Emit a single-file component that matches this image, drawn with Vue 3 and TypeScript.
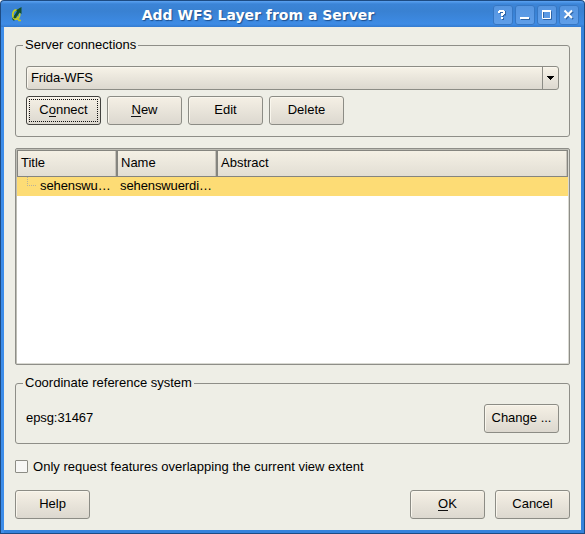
<script setup lang="ts">
import { ref } from 'vue'

interface Action { before: string; key: string; after: string }

const actions: Action[] = [
  { before: 'C', key: 'o', after: 'nnect' },
  { before: '', key: 'N', after: 'ew' },
  { before: 'Edit', key: '', after: '' },
  { before: 'Delete', key: '', after: '' },
]
const onlyOverlapping = ref(false)
</script>

<template>
  <div class="window">
    <header class="titlebar">
      <svg class="logo" width="12" height="16" viewBox="0 0 12 16">
        <path d="M1 12 3 14 8.500 5.500 10.500 7V0L4.500 3.500 6 4.500z" fill="#14502c" />
        <path d="M5.500 2.800C2.800 3 1.800 5.500 1.800 8S3 12.200 5 12.200 8.800 10.500 8.800 6.500" fill="none" stroke="#c8cf20" stroke-width="1.700" />
        <path d="M6.200 9.500 8 13.500H10" fill="none" stroke="#c0c522" stroke-width="1.700" />
        <path d="M3 11 8 3.500" stroke="#14502c" stroke-width="1.800" />
      </svg>
      <h1 class="title">Add WFS Layer from a Server</h1>
      <div class="controls">
        <span class="control"><svg width="20" height="20" viewBox="0 0 20 20"><path class="shade" d="M6 7.500H8V7H12V9.500H10V12M9 14H11" /><path d="M5 7H7M6 6H11M11 6V9M11 9H8M9 8V11M8 13H10" /></svg></span>
        <span class="control"><svg width="20" height="20" viewBox="0 0 20 20"><path class="shade" d="M6 14H15" /><path d="M5 13H14" /></svg></span>
        <span class="control"><svg width="20" height="20" viewBox="0 0 20 20"><path class="shade thin" d="M6.500 6.500H14.500V14.500H6.500z" /><path class="thin" d="M5.500 5.500H13.500V13.500H5.500z" /><path d="M5 6H14" /></svg></span>
        <span class="control"><svg width="20" height="20" viewBox="0 0 20 20"><path class="shade" d="M6.500 6.500 14 14M14 6.500 6.500 14" /><path d="M5.500 5.500 13 13M13 5.500 5.500 13" /></svg></span>
      </div>
    </header>

    <main class="dialog">
      <section class="group connections">
        <h2 class="legend">Server connections</h2>
        <div class="combo">
          <span class="combo-value">Frida-WFS</span>
          <span class="combo-arrow"><svg width="7" height="4" viewBox="0 0 7 4" shape-rendering="crispEdges"><path d="M0 0H7V1H6V2H5V3H4V4H3V3H2V2H1V1H0z" /></svg></span>
        </div>
        <div class="actions">
          <button v-for="(a, i) in actions" :key="i" class="btn" :class="{ focused: i === 0 }"><span>{{ a.before }}<span v-if="a.key" class="key">{{ a.key }}</span>{{ a.after }}</span></button>
        </div>
      </section>

      <section class="table">
        <div class="row head">
          <span class="cell">Title</span><span class="cell">Name</span><span class="cell">Abstract</span>
        </div>
        <div class="row selected">
          <span class="item"><i class="branch"></i>sehenswu…</span><span class="item">sehenswuerdi…</span>
        </div>
      </section>

      <section class="group crs">
        <h2 class="legend">Coordinate reference system</h2>
        <div class="crs-body">
          <span class="epsg">epsg:31467</span>
          <button class="btn"><span>Change ...</span></button>
        </div>
      </section>

      <label class="check">
        <input v-model="onlyOverlapping" type="checkbox" />
        <span>Only request features overlapping the current view extent</span>
      </label>

      <footer class="footer">
        <button class="btn help"><span>Help</span></button>
        <button class="btn"><span><span class="key">O</span>K</span></button>
        <button class="btn"><span>Cancel</span></button>
      </footer>
    </main>
  </div>
</template>

<style>
body { background: #fff; }
</style>

<style scoped>
* { box-sizing: border-box; }
.window {
  width: 585px;
  height: 534px;
  display: flex;
  flex-direction: column;
  padding: 1px;
  border-radius: 4px 4px 0 0;
  background: #1d4b83;
  font: 13px/16px "Liberation Sans", Arial, sans-serif;
  color: #000;
}
.titlebar {
  height: 26px;
  flex: none;
  display: flex;
  align-items: center;
  padding: 0 5px 0 10px;
  border-radius: 3px 3px 0 0;
  background: linear-gradient(#5ba2f2 0, #3b84d7 3px, #3981d2 10px, #3d8be5 23px, #347bcf);
}
.logo { flex: none; margin-top: 2px; }
.title {
  flex: 1;
  margin: 2px 0 0;
  text-align: center;
  font: bold 14px/18px "DejaVu Sans", sans-serif;
  color: #fff;
  text-shadow: 1px 1px 1px #1d4e8c;
}
.controls { display: flex; gap: 2px; padding-top: 2px; }
.control {
  width: 20px;
  height: 20px;
  border-radius: 3px;
  background: linear-gradient(#5595e0, #609fe9);
  box-shadow: inset 0 0 0 1px #3677c4;
}
.control svg { display: block; fill: none; stroke: #fff; stroke-width: 2; }
.control .shade { stroke: #2e64a6; }
.control .thin { stroke-width: 1; }
.dialog {
  flex: 1;
  display: flex;
  flex-direction: column;
  margin: 0 3px 3px;
  padding: 18px 11px 11px;
  background: #eeeee6;
  box-shadow: 3px 0 #3583dc, -3px 0 #3d8de9, 0 3px #3583dc, 3px 3px #3583dc, -3px 3px #3d8de9;
}
.group { border: 1px solid #8e8e88; border-radius: 3px; }
.legend {
  width: max-content;
  height: 16px;
  margin: -9px 0 0 7px;
  padding: 0 2px;
  font: inherit;
  background: #eeeee6;
}
.connections { height: 92px; flex: none; }
.combo {
  height: 24px;
  display: flex;
  align-items: center;
  margin: 13px 10px 0;
  border: 1px solid #8c8c85;
  border-radius: 3px;
  background: linear-gradient(#f7f3e8, #dcd8cf);
  box-shadow: inset 1px 1px #faf7ee;
}
.combo-value { flex: 1; padding: 0 0 1px 4px; letter-spacing: -0.1px; }
.combo-arrow {
  width: 16px;
  height: 100%;
  display: flex;
  align-items: center;
  justify-content: center;
  border-left: 1px solid #8c8c85;
}
.actions { display: flex; gap: 6px; margin: 6px 10px 0; }
.btn {
  width: 75px;
  height: 29px;
  flex: none;
  padding: 0 0 1px;
  border: 1px solid #8c8c85;
  border-radius: 3px;
  background: linear-gradient(#f5f0e5, #dcd8cf);
  box-shadow: inset 1px 1px #f9f6ed;
  font: inherit;
  color: #000;
}
.focused { position: relative; border-color: #42423e; }
.focused::after { content: ''; position: absolute; inset: 2px; border: 1px dotted #111; }
.key { display: inline-block; height: 15px; line-height: 15px; border-bottom: 1px solid #111; }
.table {
  height: 217px;
  flex: none;
  margin-top: 11px;
  border: 1px solid #8e8e88;
  border-radius: 2px;
  background: #fff;
  box-shadow: inset 1px 1px #bdbdb5, inset -1px -1px #d9d9d2;
  padding: 1px;
}
.row { display: grid; grid-template-columns: 100px 100px 1fr; }
.head { height: 27px; background: linear-gradient(#f5f1e5, #e1ddd3); }
.cell {
  display: flex;
  align-items: center;
  padding: 0 0 1px 3px;
  border: 1px solid #85857f;
  box-shadow: inset -1px 0 #c6c2b9;
}
.selected { height: 19px; background: #fddc75; }
.item { display: flex; padding: 1px 0 0 3px; white-space: nowrap; letter-spacing: -0.1px; }
.branch { width: 9px; height: 9px; margin: -1px 4px 0 7px; border: dotted #b8b19b; border-width: 0 0 1px 1px; }
.crs { height: 61px; flex: none; margin-top: 18px; }
.crs-body { display: flex; align-items: center; justify-content: space-between; margin: 13px 10px 0; }
.epsg { padding-bottom: 1px; letter-spacing: -0.08px; }
.check { height: 16px; display: flex; align-items: center; gap: 5px; margin-top: 15px; white-space: nowrap; letter-spacing: 0.02px; }
.check input {
  appearance: none;
  width: 13px;
  height: 13px;
  margin: 0 0 2px;
  border: 1px solid #8c8c85;
  border-radius: 1px;
  background: #f7f7f5;
}
.footer { display: flex; gap: 10px; margin-top: auto; }
.help { margin-right: auto; }
</style>
